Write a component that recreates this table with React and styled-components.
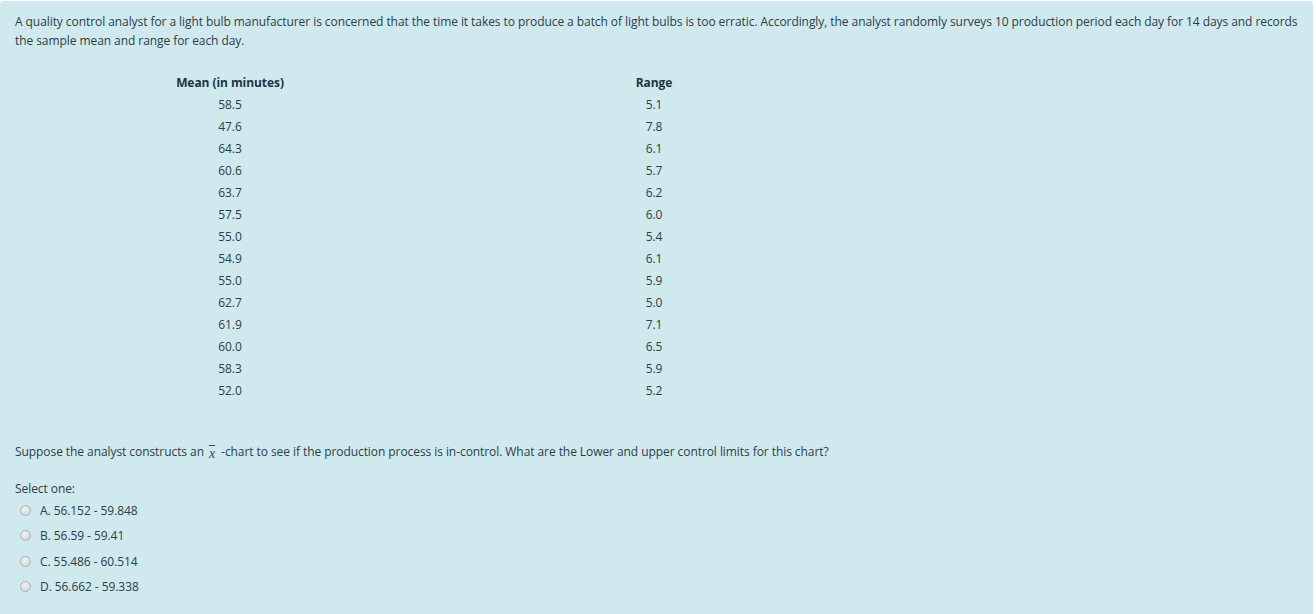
import React from 'react';
import styled, { createGlobalStyle } from 'styled-components';

const GlobalStyle = createGlobalStyle`
  html, body {
    margin: 0;
    padding: 0;
    background: #ffffff;
  }
  body {
    font-family: "Open Sans", "Noto Sans", sans-serif;
    font-size: 12px;
    letter-spacing: -0.07px;
    color: #2c3e48;
  }
`;

const Formulation = styled.div`
  margin: 1px 3px 0 0;
  height: 613px;
  box-sizing: border-box;
  background: #cfe9ef;
  border-radius: 4px 4px 0 0;
  padding: 11px 15px 0 15px;
  line-height: 19px;
`;

const Intro = styled.p`
  margin: 0;
`;

const Table = styled.div`
  display: grid;
  grid-template-columns: 430px 418px;
  margin-top: 22px;
  line-height: 22px;
`;

const Cell = styled.div`
  text-align: center;
  font-weight: ${props => (props.head ? 700 : 400)};
  color: ${props => (props.head ? '#22343e' : '#2c3e48')};
`;

const Question = styled.p`
  margin: 40px 0 0 0;
`;

const XBar = styled.span`
  display: inline-block;
  position: relative;
  top: 2px;
  font-family: "Liberation Serif", serif;
  font-style: italic;
  font-size: 14px;
  text-decoration: overline;
  margin: 0 6px 0 5px;
  color: #444;
`;

const Prompt = styled.div`
  margin-top: 18px;
`;

const Options = styled.div`
  display: flex;
  flex-direction: column;
  gap: 6.3px;
  margin-top: 3px;
  padding-left: 5px;
`;

const Option = styled.label`
  display: flex;
  align-items: center;
  gap: 9px;
  line-height: 19px;
`;

const Radio = styled.span`
  width: 9px;
  height: 9px;
  border-radius: 50%;
  border: 1px solid #a9b3b7;
  background: radial-gradient(circle at 40% 35%, #f2f2f2, #cfcfcf);
  box-sizing: content-box;
`;

const means = ['58.5', '47.6', '64.3', '60.6', '63.7', '57.5', '55.0', '54.9', '55.0', '62.7', '61.9', '60.0', '58.3', '52.0'];
const ranges = ['5.1', '7.8', '6.1', '5.7', '6.2', '6.0', '5.4', '6.1', '5.9', '5.0', '7.1', '6.5', '5.9', '5.2'];
const choices = ['A. 56.152 - 59.848', 'B. 56.59 - 59.41', 'C. 55.486 - 60.514', 'D. 56.662 - 59.338'];

export default function App() {
  return (
    <>
      <GlobalStyle />
      <Formulation>
        <Intro>
          A quality control analyst for a light bulb manufacturer is concerned that the time it takes to produce a batch of light bulbs is too erratic. Accordingly, the analyst randomly surveys 10 production period each day for 14 days and records the sample mean and range for each day.
        </Intro>
        <Table>
          <Cell head>Mean (in minutes)</Cell>
          <Cell head>Range</Cell>
          {means.map((m, i) => (
            <React.Fragment key={i}>
              <Cell>{m}</Cell>
              <Cell>{ranges[i]}</Cell>
            </React.Fragment>
          ))}
        </Table>
        <Question>
          Suppose the analyst constructs an<XBar>x</XBar>-chart to see if the production process is in-control. What are the Lower and upper control limits for this chart?
        </Question>
        <Prompt>Select one:</Prompt>
        <Options>
          {choices.map(c => (
            <Option key={c}>
              <Radio />
              {c}
            </Option>
          ))}
        </Options>
      </Formulation>
    </>
  );
}
